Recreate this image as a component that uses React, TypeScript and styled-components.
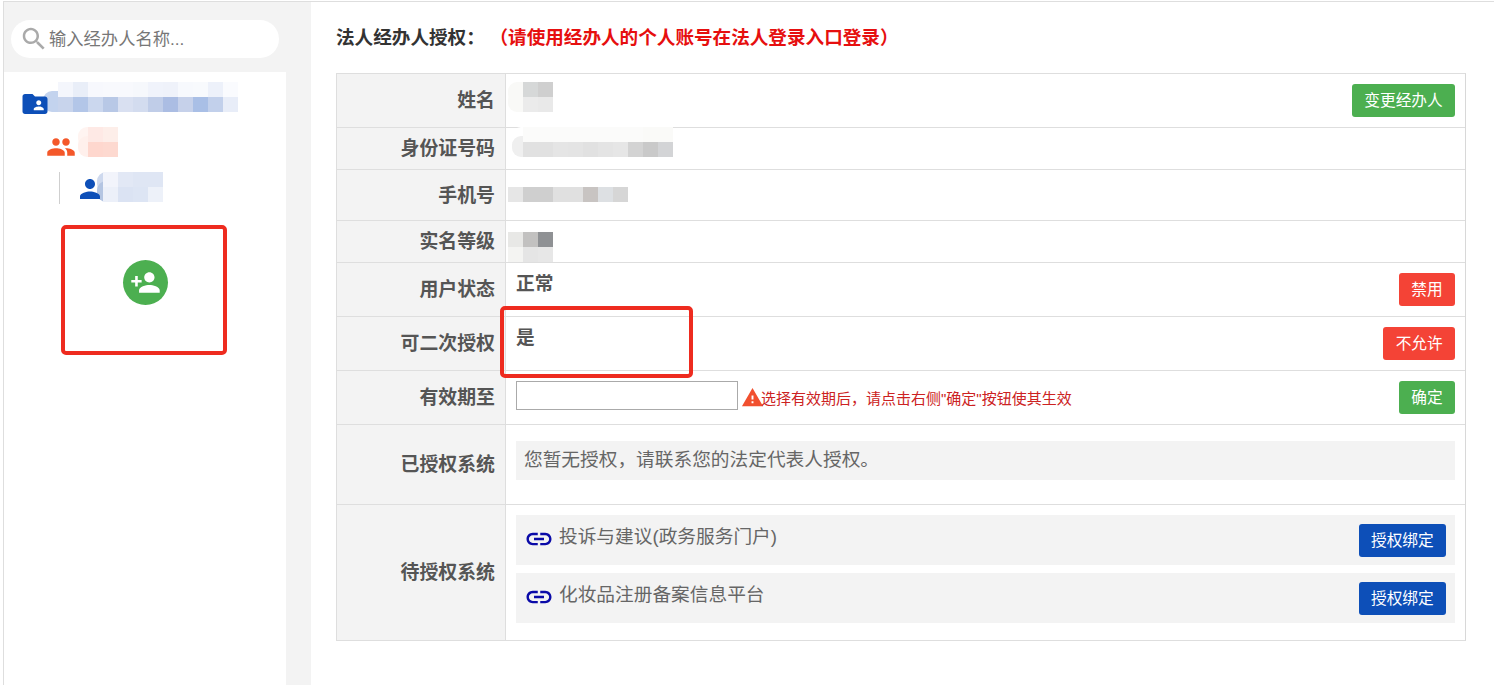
import React from "react";
import styled, { createGlobalStyle } from "styled-components";

const Global = createGlobalStyle`
  html, body { margin: 0; padding: 0; background: #fff; height: 100%; overflow: hidden; }
  body { font-family: "Liberation Sans", "Noto Sans CJK SC", sans-serif; color: #555; }
  #root { height: 100%; }
  * { box-sizing: border-box; }
`;

const Page = styled.div`
  display: flex;
  height: 684px;
  margin: 1px 0 0 3px;
  border-top: 1px solid #dedede;
  border-left: 1px solid #dedede;
  overflow: hidden;
`;

const Sidebar = styled.aside`
  width: 307px;
  flex: none;
  background: #f3f3f3;
  display: flex;
  flex-direction: column;
  padding-top: 18px;
`;

const SearchPill = styled.label`
  display: flex;
  align-items: center;
  width: 268px;
  height: 38px;
  margin: 0 0 14px 7px;
  padding-left: 8px;
  background: #fff;
  border-radius: 19px;
`;

const SearchInput = styled.input`
  flex: 1;
  min-width: 0;
  border: 0;
  outline: 0;
  background: transparent;
  padding: 0;
  font: 17.3px "Liberation Sans", "Noto Sans CJK SC", sans-serif;
  &::placeholder { color: #777; opacity: 1; }
`;

const Tree = styled.div`
  width: 282px;
  flex: 1;
  background: #fff;
  display: flex;
  flex-direction: column;
  padding-top: 10px;
`;

const TreeRow = styled.div<{ $indent: number; $height: number }>`
  display: flex;
  align-items: flex-start;
  height: ${(p) => p.$height}px;
  margin-left: ${(p) => p.$indent}px;
`;

const TreeGuide = styled.div`
  width: 1px;
  height: 32px;
  background: #cfcfcf;
  margin-right: 15px;
`;

const Shift = styled.div<{ $x: number; $y: number }>`
  display: flex;
  margin: ${(p) => p.$y}px 0 0 ${(p) => p.$x}px;
  flex: none;
`;

const TreeIcon = styled(Shift)`
  position: relative;
  z-index: 1;
`;

const AddBox = styled.div`
  width: 166px;
  height: 130px;
  margin: 10px 0 0 57px;
  padding: 31px 0 0 58px;
  border: 4px solid #ee2b1f;
  border-radius: 5px;
`;

const AddCircle = styled.button`
  display: flex;
  align-items: center;
  justify-content: center;
  width: 45px;
  height: 45px;
  padding: 0;
  border: 0;
  border-radius: 50%;
  background: #4caf50;
`;

const Main = styled.main`
  flex: 1;
  min-width: 0;
  padding: 0 28px 0 25px;
  background: #fff;
`;

const Title = styled.h1`
  margin: 0;
  height: 71px;
  line-height: 71px;
  font-size: 18.6px;
  font-weight: 700;
  color: #333;
  white-space: nowrap;
`;

const TitleNote = styled.span`
  margin-left: 14px;
  color: #e60f0f;
`;

const Table = styled.section`
  border: 1px solid #dedede;
  border-right-color: #d8d8d8;
`;

const Row = styled.div<{ $height: number; $first?: boolean }>`
  display: flex;
  height: ${(p) => p.$height}px;
  border-top: ${(p) => (p.$first ? "0" : "1px solid #dedede")};
`;

const Label = styled.div`
  width: 169px;
  flex: none;
  display: flex;
  align-items: center;
  justify-content: flex-end;
  padding: 0 10px 4px 0;
  background: #f3f3f3;
  border-right: 1px solid #dedede;
  font-size: 18.9px;
  font-weight: 700;
  color: #555;
`;

const Cell = styled.div<{ $top?: number }>`
  position: relative;
  flex: 1;
  min-width: 0;
  display: flex;
  justify-content: space-between;
  align-items: flex-start;
  padding: ${(p) => p.$top ?? 10}px 10px 0;
`;

const StackCell = styled(Cell)`
  flex-direction: column;
  justify-content: flex-start;
  align-items: stretch;
  gap: 8px;
`;

const Value = styled.span`
  font-size: 18.7px;
  font-weight: 700;
  line-height: 22px;
  color: #555;
`;

const Button = styled.button<{ $tone: "green" | "red" | "blue" }>`
  flex: none;
  height: 33px;
  padding: 0 12.3px 3px;
  border: 0;
  border-radius: 3px;
  color: #fff;
  font: 15.7px "Liberation Sans", "Noto Sans CJK SC", sans-serif;
  background: ${(p) => ({ green: "#4caf50", red: "#f44336", blue: "#0d4fb8" }[p.$tone])};
`;

const DateGroup = styled.div`
  display: flex;
  align-items: flex-start;
`;

const DateInput = styled.input`
  width: 222px;
  height: 29px;
  padding: 0 4px;
  border: 1px solid #aaa;
  background: #fff;
  outline: 0;
`;

const Warn = styled.span`
  display: flex;
  align-items: center;
  height: 32px;
  margin-left: 3px;
  font-size: 15px;
  color: #cc2222;
  white-space: nowrap;
  svg { margin-right: -3px; }
`;

const Notice = styled.div`
  height: 39px;
  padding-left: 8px;
  background: #f3f3f3;
  font-size: 18.7px;
  line-height: 38px;
  color: #666;
`;

const SystemBox = styled.div`
  display: flex;
  align-items: flex-start;
  justify-content: space-between;
  height: 50px;
  padding: 9px 9px 0 8px;
  background: #f3f3f3;
`;

const SystemName = styled.div`
  display: flex;
  align-items: flex-start;
  gap: 5px;
  height: 30px;
  font-size: 18.7px;
  line-height: 26px;
  color: #666;
`;

const Callout = styled.div`
  position: absolute;
  left: -6px;
  top: -11px;
  width: 193px;
  height: 72px;
  border: 4px solid #ee2b1f;
  border-radius: 5px;
  pointer-events: none;
`;

const MosaicSvg = styled.svg<{ $x: number; $y: number }>`
  position: absolute;
  left: ${(p) => p.$x}px;
  top: ${(p) => p.$y}px;
  pointer-events: none;
`;

type MosaicData = { fade: number; fadeColors: string[]; rows: string[][] };

function MosaicArt({ fade, fadeColors, rows }: MosaicData) {
  return (
    <>
      {fade > 0 &&
        fadeColors.map((c, i) => (
          <rect key={i} x={0} y={i * 15 - (i ? 6 : 0)} width={fade + 14} height={21} rx={9} fill={c} />
        ))}
      {rows.map((r, y) =>
        r.map((c, x) => <rect key={`${x}-${y}`} x={fade + x * 15} y={y * 15} width={15.5} height={15} fill={c} />)
      )}
    </>
  );
}

function FlowMosaic(d: MosaicData) {
  return (
    <svg width={d.fade + d.rows[0].length * 15} height={d.rows.length * 15} aria-hidden="true">
      <MosaicArt {...d} />
    </svg>
  );
}

function CellMosaic({ x, y, ...d }: MosaicData & { x: number; y: number }) {
  return (
    <MosaicSvg $x={x} $y={y} width={d.fade + d.rows[0].length * 15} height={d.rows.length * 15} aria-hidden="true">
      <MosaicArt {...d} />
    </MosaicSvg>
  );
}

const Icon = ({ d, size = 30, color }: { d: string; size?: number; color: string }) => (
  <svg width={size} height={size} viewBox="0 0 24 24" fill={color} style={{ flex: "none" }} aria-hidden="true">
    <path d={d} />
  </svg>
);

const ICONS = {
  search:
    "M15.5 14h-.79l-.28-.27C15.41 12.59 16 11.11 16 9.5 16 5.91 13.09 3 9.5 3S3 5.91 3 9.5 5.91 16 9.5 16c1.61 0 3.09-.59 4.23-1.57l.27.28v.79l5 4.99L20.49 19l-4.99-5zm-6 0C7.01 14 5 11.99 5 9.5S7.01 5 9.5 5 14 7.01 14 9.5 11.99 14 9.5 14z",
  folder:
    "M20 6h-8l-2-2H4c-1.1 0-1.99.9-1.99 2L2 18c0 1.1.9 2 2 2h16c1.1 0 2-.9 2-2V8c0-1.1-.9-2-2-2zm-5 3c1.1 0 2 .9 2 2s-.9 2-2 2-2-.9-2-2 .9-2 2-2zm4 8h-8v-1c0-1.33 2.67-2 4-2s4 .67 4 2v1z",
  people:
    "M16 11c1.66 0 2.99-1.34 2.99-3S17.66 5 16 5c-1.66 0-3 1.34-3 3s1.34 3 3 3zm-8 0c1.66 0 2.99-1.34 2.99-3S9.66 5 8 5C6.34 5 5 6.34 5 8s1.34 3 3 3zm0 2c-2.33 0-7 1.17-7 3.5V19h14v-2.5c0-2.33-4.67-3.5-7-3.5zm8 0c-.29 0-.62.02-.97.05 1.16.84 1.97 1.97 1.97 3.45V19h6v-2.5c0-2.33-4.67-3.5-7-3.5z",
  person:
    "M12 12c2.21 0 4-1.79 4-4s-1.79-4-4-4-4 1.79-4 4 1.79 4 4 4zm0 2c-2.67 0-8 1.34-8 4v2h16v-2c0-2.66-5.33-4-8-4z",
  personAdd:
    "M15 12c2.21 0 4-1.79 4-4s-1.79-4-4-4-4 1.79-4 4 1.79 4 4 4zm-9-2V7H4v3H1v2h3v3h2v-3h3v-2H6zm9 4c-2.67 0-8 1.34-8 4v2h16v-2c0-2.66-5.33-4-8-4z",
  link:
    "M3.9 12c0-1.71 1.39-3.1 3.1-3.1h4V7H7c-2.76 0-5 2.24-5 5s2.24 5 5 5h4v-1.9H7c-1.71 0-3.1-1.39-3.1-3.1zM8 13h8v-2H8v2zm9-6h-4v1.9h4c1.71 0 3.1 1.39 3.1 3.1s-1.39 3.1-3.1 3.1h-4V17h4c2.76 0 5-2.24 5-5s-2.24-5-5-5z",
  warning: "M1 21h22L12 2 1 21zm12-3h-2v-2h2v2zm0-4h-2v-4h2v4z",
};

const folderMosaic: MosaicData = {
  fade: 15,
  fadeColors: ["#ffffff", "#c3d3ee"],
  rows: [
    ["#f4f6fc", "#e9eef8", "#f7f8fd", "#f8f9fd", "#f8f9fd", "#f6f8fc", "#f0f3fb", "#eff2fa", "#f7f9fd", "#f8fafd", "#edf1fa", "#fafbfe"],
    ["#c8d4ec", "#b3c6e8", "#cbd7ee", "#b8c8e6", "#d9e0f1", "#d3dcef", "#c0cde8", "#abbde3", "#c6d1ea", "#a9bfe6", "#c2d0eb", "#e8edf8"],
  ],
};
const groupMosaic: MosaicData = {
  fade: 10,
  fadeColors: ["#fff4f1", "#fff0ec"],
  rows: [
    ["#fee9e5", "#fdeee9"],
    ["#fed7ce", "#fdd9d0"],
  ],
};
const personMosaic: MosaicData = {
  fade: 6,
  fadeColors: ["#ced9ee", "#b4c5e2"],
  rows: [
    ["#f2f4fb", "#e2e8f5", "#dfe6f4", "#dfe6f4"],
    ["#ecf0f9", "#dbe3f3", "#dde5f4", "#edf1f9"],
  ],
};
const nameMosaic: MosaicData = {
  fade: 15,
  fadeColors: ["#f9f9f7", "#f9f9f7"],
  rows: [
    ["#d6d8d8", "#cfcfcf"],
    ["#ebebeb", "#e9e9e9"],
  ],
};
const idMosaic: MosaicData = {
  fade: 11,
  fadeColors: ["#ffffff", "#efefef"],
  rows: [
    ["#fbfbfa", "#fbfbfa", "#fbfbfa", "#fbfbfa", "#fbfbfa", "#fbfbfa", "#fbfbfa", "#fbfbfa", "#fafaf8", "#fafaf8"],
    ["#e1e1e1", "#e1e1e1", "#e5e5e5", "#e4e4e4", "#e1e1e1", "#e4e4e4", "#e6e6e6", "#d3d3d3", "#c9c9c9", "#d3d4d6"],
  ],
};
const phoneMosaic: MosaicData = {
  fade: 0,
  fadeColors: [],
  rows: [["#e6e6e6", "#cfcfcf", "#cfcfcf", "#e0e0e0", "#e0e0e0", "#c8c4c2", "#dde0e3", "#d6d6d6"]],
};
const levelMosaic: MosaicData = {
  fade: 0,
  fadeColors: [],
  rows: [
    ["#e8e8e6", "#c2c1c0", "#8f9194"],
    ["#f4f4f2", "#e5e5e5", "#e7e7e7"],
  ],
};

export default function App() {
  return (
    <>
      <Global />
      <Page>
        <Sidebar>
          <SearchPill>
            <Icon d={ICONS.search} color="#aaaaaa" />
            <SearchInput placeholder="输入经办人名称..." readOnly />
          </SearchPill>
          <Tree>
            <TreeRow $indent={16} $height={45}>
              <TreeIcon $x={0} $y={7}>
                <Icon d={ICONS.folder} color="#0d4fb8" />
              </TreeIcon>
              <Shift $x={-7} $y={0}>
                <FlowMosaic {...folderMosaic} />
              </Shift>
            </TreeRow>
            <TreeRow $indent={42} $height={45}>
              <TreeIcon $x={0} $y={5}>
                <Icon d={ICONS.people} color="#f4582a" />
              </TreeIcon>
              <Shift $x={2} $y={0}>
                <FlowMosaic {...groupMosaic} />
              </Shift>
            </TreeRow>
            <TreeRow $indent={55} $height={43}>
              <TreeGuide />
              <TreeIcon $x={0} $y={2}>
                <Icon d={ICONS.person} color="#0d4fb8" />
              </TreeIcon>
              <Shift $x={-8} $y={0}>
                <FlowMosaic {...personMosaic} />
              </Shift>
            </TreeRow>
            <AddBox>
              <AddCircle aria-label="添加经办人">
                <Icon d={ICONS.personAdd} size={31} color="#ffffff" />
              </AddCircle>
            </AddBox>
          </Tree>
        </Sidebar>
        <Main>
          <Title>
            法人经办人授权：<TitleNote>（请使用经办人的个人账号在法人登录入口登录）</TitleNote>
          </Title>
          <Table>
            <Row $first $height={53}>
              <Label>姓名</Label>
              <Cell>
                <CellMosaic x={2} y={8} {...nameMosaic} />
                <span />
                <Button $tone="green">变更经办人</Button>
              </Cell>
            </Row>
            <Row $height={42}>
              <Label>身份证号码</Label>
              <Cell>
                <CellMosaic x={6} y={-1} {...idMosaic} />
              </Cell>
            </Row>
            <Row $height={51}>
              <Label>手机号</Label>
              <Cell>
                <CellMosaic x={2} y={17} {...phoneMosaic} />
              </Cell>
            </Row>
            <Row $height={42}>
              <Label>实名等级</Label>
              <Cell>
                <CellMosaic x={2} y={11} {...levelMosaic} />
              </Cell>
            </Row>
            <Row $height={54}>
              <Label>用户状态</Label>
              <Cell>
                <Value>正常</Value>
                <Button $tone="red">禁用</Button>
              </Cell>
            </Row>
            <Row $height={54}>
              <Label>可二次授权</Label>
              <Cell>
                <Value>是</Value>
                <Button $tone="red">不允许</Button>
                <Callout />
              </Cell>
            </Row>
            <Row $height={54}>
              <Label>有效期至</Label>
              <Cell>
                <DateGroup>
                  <DateInput />
                  <Warn>
                    <Icon d={ICONS.warning} size={23} color="#f1502f" />
                    选择有效期后，请点击右侧"确定"按钮使其生效
                  </Warn>
                </DateGroup>
                <Button $tone="green">确定</Button>
              </Cell>
            </Row>
            <Row $height={80}>
              <Label>已授权系统</Label>
              <StackCell $top={16}>
                <Notice>您暂无授权，请联系您的法定代表人授权。</Notice>
              </StackCell>
            </Row>
            <Row $height={136}>
              <Label>待授权系统</Label>
              <StackCell>
                <SystemBox>
                  <SystemName>
                    <Icon d={ICONS.link} color="#0a0aa8" />
                    投诉与建议(政务服务门户)
                  </SystemName>
                  <Button $tone="blue">授权绑定</Button>
                </SystemBox>
                <SystemBox>
                  <SystemName>
                    <Icon d={ICONS.link} color="#0a0aa8" />
                    化妆品注册备案信息平台
                  </SystemName>
                  <Button $tone="blue">授权绑定</Button>
                </SystemBox>
              </StackCell>
            </Row>
          </Table>
        </Main>
      </Page>
    </>
  );
}
